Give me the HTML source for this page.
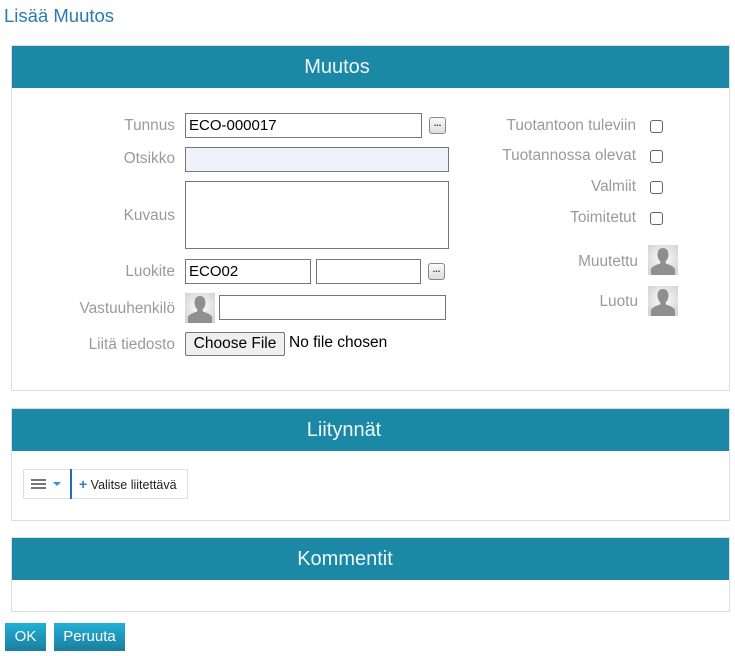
<!DOCTYPE html>
<html><head><meta charset="utf-8"><style>
*{box-sizing:border-box;margin:0;padding:0}
body{width:735px;height:656px;background:#fff;font-family:"Liberation Sans",sans-serif;position:relative;overflow:hidden}
.a{position:absolute}
.panel{position:absolute;left:11px;width:719px;border:1px solid #ddd;background:#fff}
.hd{background:#1b88a6;color:#eef8fb;font-size:20px;height:42px;line-height:42px;position:relative}
.hd span{position:absolute;transform:translateX(-50%);top:0}
.lbl{position:absolute;color:#9a9a9a;font-size:15.4px;text-align:right;white-space:nowrap}
.inp{position:absolute;border:1px solid #767676;background:#fff;font-size:15px;padding-left:3px;color:#000}
.dots{position:absolute;width:17px;height:17px;border:1px solid #888;border-radius:3px;background:linear-gradient(#fafafa,#ddd);font-size:9px;line-height:10px;text-align:center;color:#333;font-weight:bold}
.cb{position:absolute;width:13px;height:13px;border:1px solid #666;border-radius:3px;background:#fff}
.av{position:absolute;width:30px;height:30px}
.btn{position:absolute;top:623px;height:28px;background:linear-gradient(#22b0d6,#1b7e9c);color:#fff;font-size:15px;line-height:28px;text-align:center}
</style></head><body>
<svg width="0" height="0" style="position:absolute"><defs>
<radialGradient id="g" cx="50%" cy="45%" r="60%"><stop offset="0" stop-color="#fff"/><stop offset="1" stop-color="#d6d6d6"/></radialGradient>
<symbol id="p" viewBox="0 0 30 30"><rect width="30" height="30" fill="url(#g)"/><path d="M15 3c-3.5 0-5.5 2.6-5.5 6.5 0 3 1.2 5.5 2.8 6.8l0 2.2c-4 1.2-8.3 3-9.3 5.5V30h24V24c-1-2.5-5.3-4.3-9.3-5.5v-2.2c1.6-1.3 2.8-3.8 2.8-6.8C20.5 5.6 18.5 3 15 3z" fill="#8f8f8f"/></symbol>
</defs></svg>
<div class="a" style="left:4px;top:5px;font-size:18.5px;color:#2a7bb0">Lisää Muutos</div>

<div class="panel" style="top:45px;height:346px"><div class="hd"><span style="left:325px">Muutos</span></div></div>
<div class="lbl" style="right:560px;top:117px">Tunnus</div>
<div class="inp" style="left:185px;top:113px;width:237px;height:25px;line-height:23px">ECO-000017</div>
<div class="dots" style="left:429px;top:117px">...</div>
<div class="lbl" style="right:560px;top:150px">Otsikko</div>
<div class="inp" style="left:185px;top:147px;width:264px;height:25px;background:#eef3fa"></div>
<div class="lbl" style="right:560px;top:207px">Kuvaus</div>
<div class="inp" style="left:185px;top:181px;width:264px;height:68px"></div>
<div class="lbl" style="right:560px;top:263px">Luokite</div>
<div class="inp" style="left:185px;top:259px;width:126px;height:25px;line-height:23px">ECO02</div>
<div class="inp" style="left:316px;top:259px;width:105px;height:25px"></div>
<div class="dots" style="left:428px;top:263px">...</div>
<div class="lbl" style="right:560px;top:300px">Vastuuhenkilö</div>
<svg class="av" style="left:185px;top:293px"><use href="#p"/></svg>
<div class="inp" style="left:219px;top:295px;width:227px;height:25px"></div>
<div class="lbl" style="right:560px;top:336px">Liitä tiedosto</div>
<div class="a" style="left:185px;top:332px;width:100px;height:24px;border:1px solid #767676;border-radius:2px;background:#efefef;font-size:15.5px;line-height:22px;text-align:center">Choose File</div>
<div class="a" style="left:289px;top:334px;font-size:15.5px">No file chosen</div>

<div class="lbl" style="right:99px;top:117px">Tuotantoon tuleviin</div><div class="cb" style="left:650px;top:120px"></div>
<div class="lbl" style="right:99px;top:147px">Tuotannossa olevat</div><div class="cb" style="left:650px;top:150px"></div>
<div class="lbl" style="right:99px;top:178px">Valmiit</div><div class="cb" style="left:650px;top:181px"></div>
<div class="lbl" style="right:99px;top:209px">Toimitetut</div><div class="cb" style="left:650px;top:212px"></div>
<div class="lbl" style="right:97px;top:253px">Muutettu</div><svg class="av" style="left:648px;top:245px"><use href="#p"/></svg>
<div class="lbl" style="right:97px;top:293px">Luotu</div><svg class="av" style="left:648px;top:286px"><use href="#p"/></svg>

<div class="panel" style="top:408px;height:113px"><div class="hd"><span style="left:332px">Liitynnät</span></div></div>
<div class="a" style="left:23px;top:469px;width:165px;height:30px;border:1px solid #dde0e8;background:#fff"></div>
<div class="a" style="left:31px;top:479px;width:15px;height:2px;background:#777;box-shadow:0 4px 0 #777,0 8px 0 #777"></div>
<div class="a" style="left:53px;top:482px;width:0;height:0;border-left:4px solid transparent;border-right:4px solid transparent;border-top:4px solid #3a8fd0"></div>
<div class="a" style="left:70px;top:469px;width:2px;height:30px;background:#1e6fb5"></div>
<div class="a" style="left:79px;top:476px;font-size:12.5px;color:#222"><span style="color:#2a7bc4;font-weight:bold;font-size:14px">+</span> Valitse liitettävä</div>

<div class="panel" style="top:537px;height:75px"><div class="hd"><span style="left:333px">Kommentit</span></div></div>

<div class="btn" style="left:5px;width:41px">OK</div>
<div class="btn" style="left:54px;width:71px">Peruuta</div>
</body></html>
